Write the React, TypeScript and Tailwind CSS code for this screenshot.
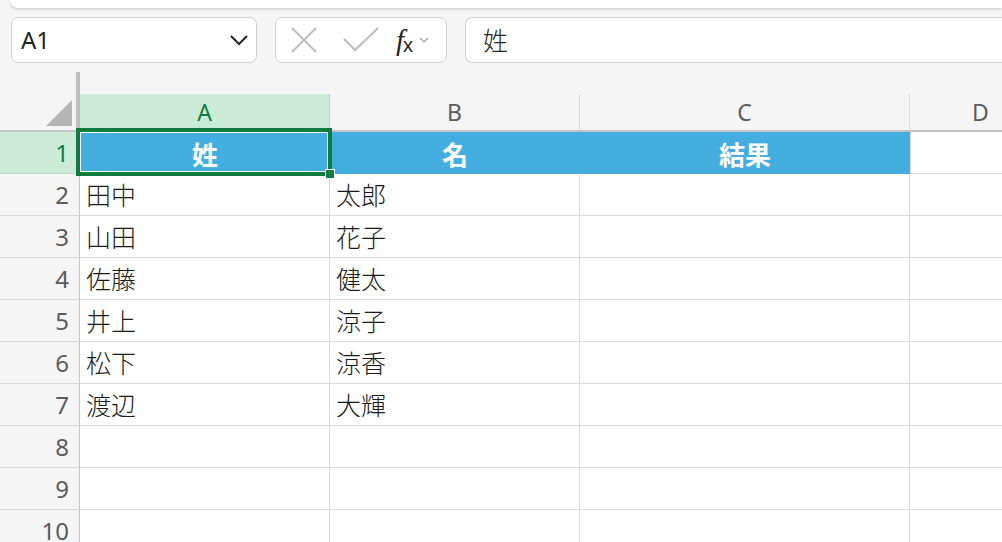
import React from 'react';

const rows: [string, string][] = [
  ['田中', '太郎'],
  ['山田', '花子'],
  ['佐藤', '健太'],
  ['井上', '涼子'],
  ['松下', '涼香'],
  ['渡辺', '大輝'],
  ['', ''],
  ['', ''],
  ['', ''],
];

const jp = { fontFamily: '"Noto Sans CJK JP", "Noto Sans", sans-serif' };

const App: React.FC = () => {
  return (
    <div
      className="w-[1002px] h-[542px] overflow-hidden bg-[#f5f5f5] flex flex-col"
      style={{ fontFamily: '"Noto Sans", "Noto Sans CJK JP", sans-serif' }}
    >
      {/* ribbon edge */}
      <div className="h-[8px] ml-[10px] bg-white rounded-bl-[10px] shadow-[0_1px_3px_rgba(0,0,0,0.2)] shrink-0" />

      {/* formula bar */}
      <div className="flex gap-[18px] pl-[11px] mt-[9px] h-[46px] shrink-0">
        <div className="w-[246px] bg-white border border-[#d1d1d1] rounded-[7px] flex items-center justify-between pl-[9px] pr-[7px]">
          <span className="text-[24px] text-[#242424]">A1</span>
          <svg width="20" height="12" viewBox="0 0 20 12" fill="none" stroke="#242424" strokeWidth="2">
            <path d="M2 2l8 8 8-8" />
          </svg>
        </div>
        <div className="w-[172px] bg-white border border-[#d1d1d1] rounded-[7px] flex items-center pl-[14px]">
          <svg width="28" height="28" viewBox="0 0 28 28" fill="none" stroke="#bdbdbd" strokeWidth="2">
            <path d="M2 2l24 24M26 2L2 26" />
          </svg>
          <svg width="36" height="26" viewBox="0 0 36 26" fill="none" stroke="#bdbdbd" strokeWidth="2" className="ml-[25px]">
            <path d="M1 12l11 11L35 1" />
          </svg>
          <span className="ml-[17px] text-[#242424] leading-none flex items-end">
            <span className="italic text-[29px]" style={{ fontFamily: '"Liberation Serif", serif' }}>f</span>
            <span className="text-[20px] -ml-[1px]" style={{ fontFamily: '"Liberation Sans", sans-serif' }}>x</span>
          </span>
          <svg width="10" height="6" viewBox="0 0 10 6" fill="none" stroke="#9e9e9e" strokeWidth="1.2" className="ml-[6px]">
            <path d="M1 1l4 4 4-4" />
          </svg>
        </div>
        <div className="flex-1 bg-white border border-[#d1d1d1] rounded-l-[7px] border-r-0 -mr-[10px] flex items-center pl-[17px]">
          <span className="text-[25px] font-light text-[#242424]" style={jp}>姓</span>
        </div>
      </div>

      {/* space above headers */}
      <div className="h-[31px] flex shrink-0">
        <div className="w-[76px]" />
        <div className="w-[4px] mt-[9px] bg-[#bdbdbd]" />
      </div>

      {/* column headers */}
      <div className="h-[38px] flex border-b-2 border-[#c4c4c4] shrink-0">
        <div className="w-[80px] border-r-4 border-[#bdbdbd] flex items-end justify-end pr-[4px] pb-[4px]">
          <svg width="26" height="26" viewBox="0 0 26 26">
            <path d="M26 0V26H0Z" fill="#b4b4b4" />
          </svg>
        </div>
        <div className="w-[250px] bg-[#cbead8] border-r border-[#a9d8bc] flex items-center justify-center text-[23px] text-[#107c41]">A</div>
        <div className="w-[250px] border-r border-[#dadada] flex items-center justify-center text-[23px] text-[#5c5c5c]">B</div>
        <div className="w-[330px] border-r border-[#dadada] flex items-center justify-center text-[23px] text-[#5c5c5c]">C</div>
        <div className="flex-1 flex items-center pl-[62px] text-[23px] text-[#5c5c5c]">D</div>
      </div>

      {/* row 1 */}
      <div className="h-[42px] flex shrink-0">
        <div className="w-[80px] bg-[#cbead8] border-r border-b border-[#bcdcc8] flex items-center justify-end pr-[10px] text-[24px] text-[#107c41]">1</div>
        <div className="w-[250px] bg-[#45aee1] relative flex items-center justify-center text-[26px] font-bold text-white" style={jp}>
          姓
          <div className="absolute left-[-4px] top-[-4px] right-[-2px] bottom-[-2px] border-4 border-[#107c41]">
            <div className="w-full h-full border border-white" />
            <div className="absolute right-[-7px] bottom-[-7px] w-[10px] h-[10px] bg-[#107c41] border border-white" />
          </div>
        </div>
        <div className="w-[250px] bg-[#45aee1] flex items-center justify-center text-[26px] font-bold text-white" style={jp}>名</div>
        <div className="w-[330px] bg-[#45aee1] flex items-center justify-center text-[26px] font-bold text-white" style={jp}>結果</div>
        <div className="flex-1 bg-white border-l border-b border-[#dadada]" />
      </div>

      {rows.map(([a, b], i) => (
        <div key={i} className="h-[42px] flex shrink-0">
          <div className="w-[80px] border-r border-r-[#c4c4c4] border-b border-b-[#dadada] flex items-center justify-end pr-[10px] text-[24px] text-[#5c5c5c]">
            {i + 2}
          </div>
          <div className="w-[250px] bg-white border-r border-b border-[#dadada] flex items-center pl-[6px] text-[25px] font-light text-[#1a1a1a]" style={jp}>{a}</div>
          <div className="w-[250px] bg-white border-r border-b border-[#dadada] flex items-center pl-[6px] text-[25px] font-light text-[#1a1a1a]" style={jp}>{b}</div>
          <div className="w-[330px] bg-white border-r border-b border-[#dadada]" />
          <div className="flex-1 bg-white border-b border-[#dadada]" />
        </div>
      ))}
    </div>
  );
};

export default App;
